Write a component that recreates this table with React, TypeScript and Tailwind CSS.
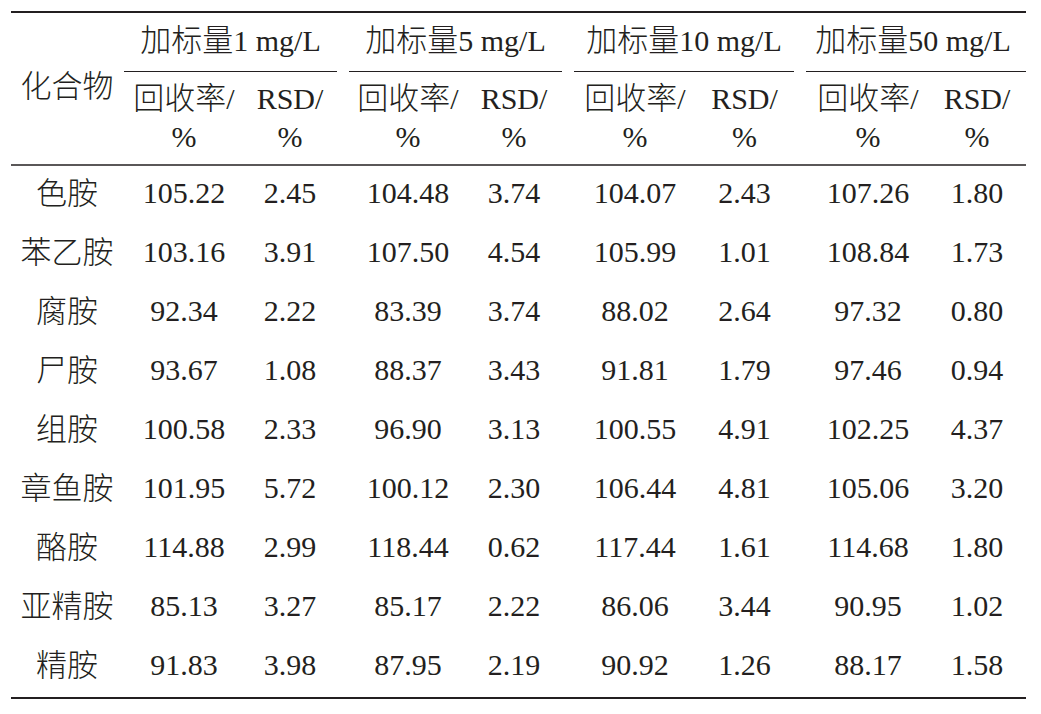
const rows = [
  ["色胺", "105.22", "2.45", "104.48", "3.74", "104.07", "2.43", "107.26", "1.80"],
  ["苯乙胺", "103.16", "3.91", "107.50", "4.54", "105.99", "1.01", "108.84", "1.73"],
  ["腐胺", "92.34", "2.22", "83.39", "3.74", "88.02", "2.64", "97.32", "0.80"],
  ["尸胺", "93.67", "1.08", "88.37", "3.43", "91.81", "1.79", "97.46", "0.94"],
  ["组胺", "100.58", "2.33", "96.90", "3.13", "100.55", "4.91", "102.25", "4.37"],
  ["章鱼胺", "101.95", "5.72", "100.12", "2.30", "106.44", "4.81", "105.06", "3.20"],
  ["酪胺", "114.88", "2.99", "118.44", "0.62", "117.44", "1.61", "114.68", "1.80"],
  ["亚精胺", "85.13", "3.27", "85.17", "2.22", "86.06", "3.44", "90.95", "1.02"],
  ["精胺", "91.83", "3.98", "87.95", "2.19", "90.92", "1.26", "88.17", "1.58"],
];

const groups = ["1", "5", "10", "50"];

// first column of each group sits a little right of its cell centre
const colPad = ["pl-[5px]", "pl-[13px]", "pr-0", "pl-[13px]", "pr-0", "pl-[13px]", "pr-0", "pl-[14px]", "pl-[6px]"];

const grid = "grid grid-cols-[107px_119px_106px_117px_108px_121px_111px_122px_104px]";

const App = () => {
  return (
    <div
      className="w-[1041px] h-[714px] bg-white pt-[11px] pl-[11px] text-[#231f20] text-[30px] leading-none"
      style={{ fontFamily: '"Liberation Serif", "Noto Sans CJK SC", serif' }}
    >
      <div className="w-[1015px]">
        <div className="h-[2px] bg-[#231f20]" />

        {/* header */}
        <div className={`${grid} grid-rows-[59px_92px]`}>
          <div className="row-span-2 flex items-center justify-center pl-[5px] pb-[4px] text-[31px] font-light">化合物</div>
          {groups.map((g, i) => (
            <div key={g} className="col-span-2 flex flex-col">
              <div className="flex-1 flex items-center justify-center pb-[2px] whitespace-nowrap">
                <span className="text-[31px] font-light">加标量</span>
                {g} mg/L
              </div>
              <div className={`h-[1.5px] bg-[#231f20] ml-[6px] ${i === 3 ? "mr-0" : "mr-[6px]"}`} />
            </div>
          ))}
          {[1, 2, 3, 4, 5, 6, 7, 8].map(c => (
            <div key={c} className={`flex flex-col items-center justify-center leading-[38px] ${colPad[c]}`}>
              {c % 2 === 1 ? (
                <div className="whitespace-nowrap"><span className="text-[31px] font-light">回收率</span>/</div>
              ) : (
                <div>RSD/</div>
              )}
              <div>%</div>
            </div>
          ))}
        </div>

        <div className="h-[2px] bg-[#5a5758]" />

        {/* body */}
        {rows.map(r => (
          <div key={r[0]} className={`${grid} h-[59px]`}>
            {r.map((v, i) => (
              <div
                key={i}
                className={`flex items-center justify-center pb-[5px] whitespace-nowrap ${colPad[i]} ${i === 0 ? "text-[31px] font-light" : ""}`}
              >
                {v}
              </div>
            ))}
          </div>
        ))}

        <div className="h-[2px] bg-[#231f20]" />
      </div>
    </div>
  );
};

export default App;
